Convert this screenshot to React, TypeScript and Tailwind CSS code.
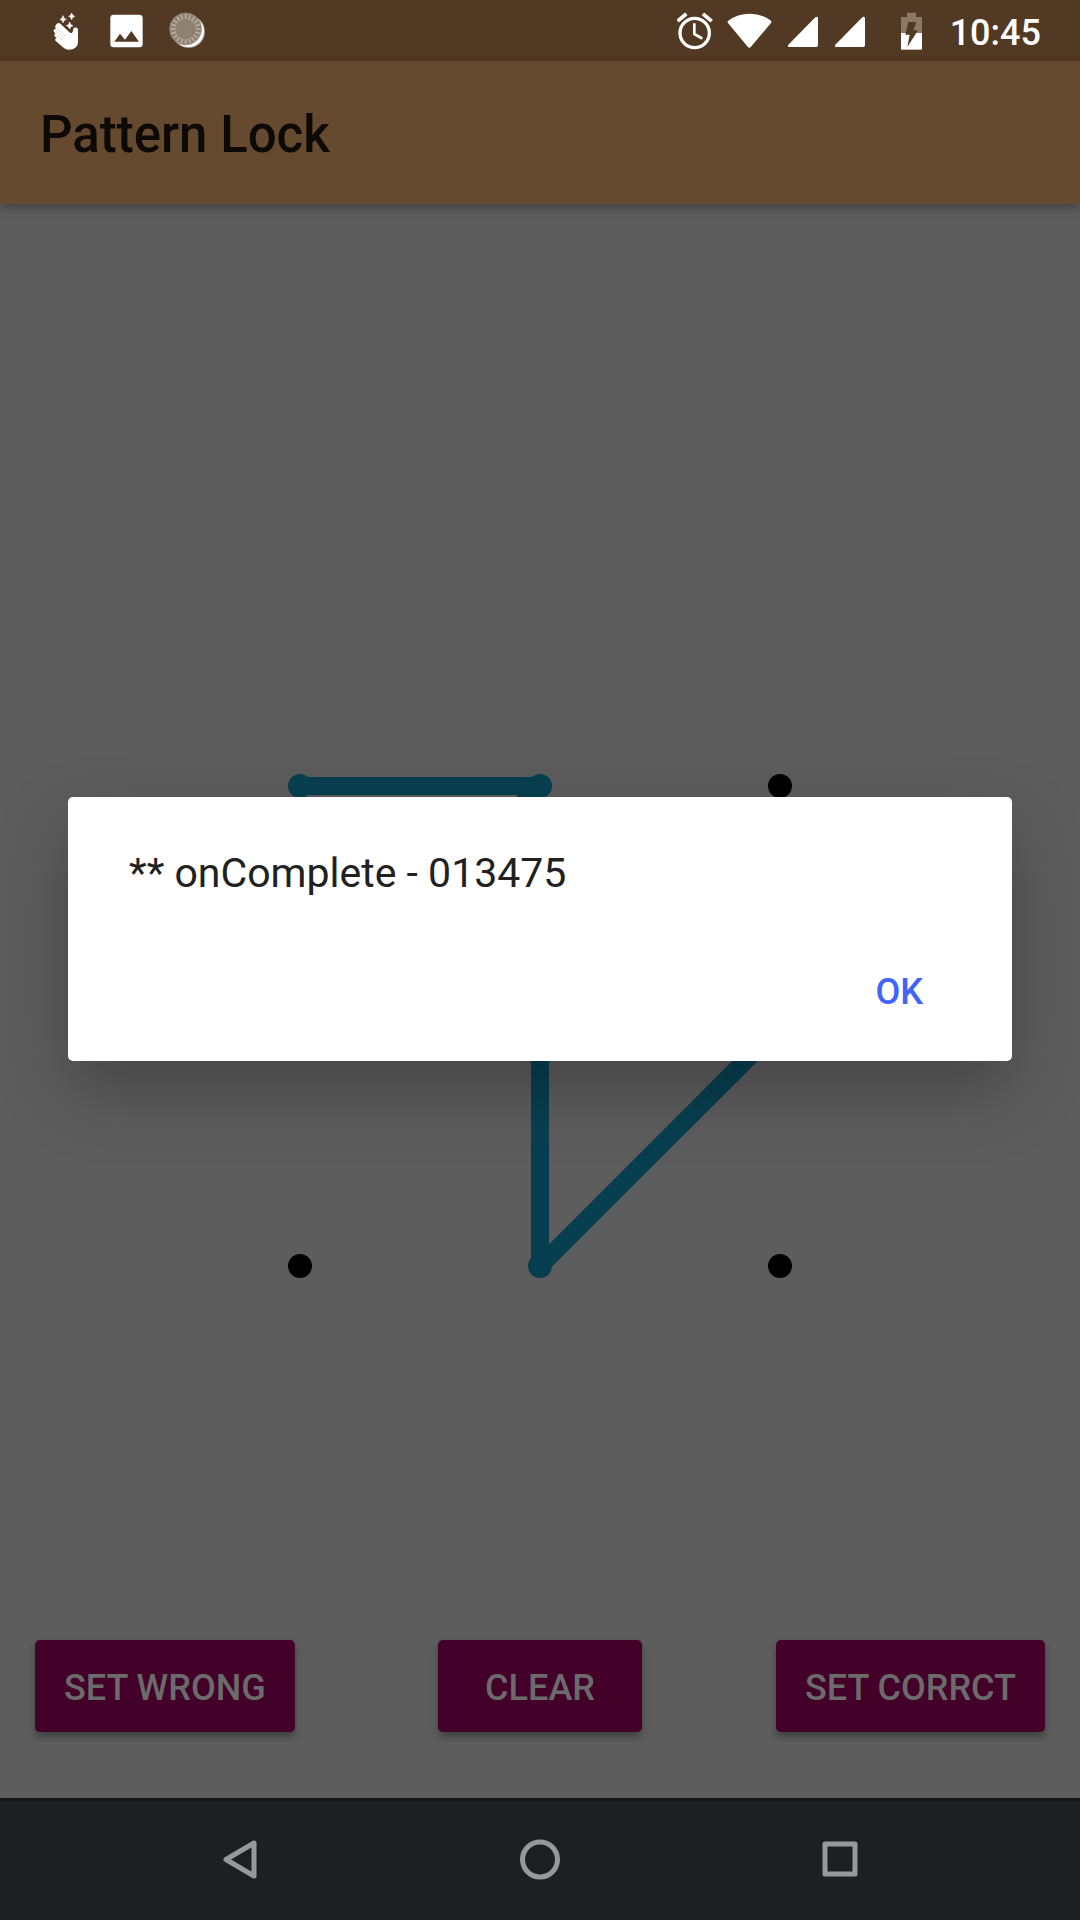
import React from "react";

const DOTS = [0, 1, 2, 3, 4, 5, 6, 7, 8];
const PATTERN = [0, 1, 3, 4, 7, 5];
const SPACING = 240;
const RADIUS = 12;

const dotX = (i: number) => RADIUS + (i % 3) * SPACING;
const dotY = (i: number) => RADIUS + Math.floor(i / 3) * SPACING;

function HandIcon() {
  return (
    <svg className="w-7 h-[42px]" viewBox="66 28 84 126" fill="#fff" aria-hidden="true">
      <g stroke="#fff" strokeWidth="2" strokeLinejoin="round">
        <path d="M99 45c2 7 4 9 10 11-6 2-8 4-10 10-2-6-4-8-9-10 5-2 7-4 9-11Z" />
        <path d="M125 37c2 6 4 8 9 10-5 2-7 4-9 10-2-6-4-8-9-10 5-2 7-4 9-10Z" />
        <path d="M119 64c2 7 4 9 10 11-6 2-8 4-10 10-2-6-4-8-10-10 6-2 8-4 10-11Z" />
      </g>
      <path d="M80 70c3-4 8-4 11-1l29 27c3 2 7 1 8-3l2-8c2-6 14-6 14 3v36c0 15-12 23-27 23-8 0-13-3-18-7l-21-18c-5-4-2-10 3-9-5-4-8-6-8-10 0-3 2-4 4-4-4-3-7-6-6-10 1-4 4-5 7-4-4-4-3-11 2-15Z" />
      <path d="m82 84 26 22M79 93l24 20M82 106l16 13" fill="none" stroke="#a89a8c" strokeWidth="2" strokeDasharray="3 2" />
    </svg>
  );
}

function ImageIcon() {
  return (
    <svg className="w-[33px] h-[42px]" viewBox="240 28 99 126" aria-hidden="true">
      <rect x="241" y="42" width="97" height="98" rx="10" fill="#fff" />
      <path d="m253 123 17-24 15 18 19-26 23 32Z" fill="#523923" />
    </svg>
  );
}

function DiscIcon() {
  const ticks = Array.from({ length: 20 }, (_, i) => i * 18);
  return (
    <svg className="w-[38px] h-[42px]" viewBox="414 28 114 126" aria-hidden="true">
      <circle cx="476" cy="93" r="49" fill="#a4988c" />
      <circle cx="475" cy="92" r="47" fill="#fff" />
      <circle cx="467" cy="85" r="48" fill="#8f8172" stroke="#a4988c" strokeWidth="2" />
      {ticks.map((a) => (
        <path key={a} d="M467 40v15" stroke="#b5aca2" strokeWidth="5" transform={`rotate(${a} 467 85)`} />
      ))}
    </svg>
  );
}

function AlarmIcon() {
  return (
    <svg className="w-9 h-[42px]" viewBox="51 28 108 126" fill="none" stroke="#fff" aria-hidden="true">
      <circle cx="104" cy="97" r="44" strokeWidth="10" />
      <path d="M57 58 75 43M151 58 133 43" strokeWidth="11" strokeLinecap="square" />
      <path d="M103 71v29l21 12" strokeWidth="8" strokeLinecap="round" strokeLinejoin="round" />
    </svg>
  );
}

function WifiIcon() {
  return (
    <svg className="w-[46px] h-[42px]" viewBox="201 28 138 126" fill="#fff" aria-hidden="true">
      <path d="M205 60q27-21 64-21t64 21q3 3 0 7l-60 71q-5 6-10 0L204 67q-3-4 1-7Z" />
    </svg>
  );
}

function SignalIcon() {
  return (
    <svg className="w-[30px] h-[42px]" viewBox="384 28 90 126" fill="#fff" aria-hidden="true">
      <path d="M466 50q7-4 8 3v81q0 5-5 5h-81q-7-1-3-7Z" />
    </svg>
  );
}

function BatteryIcon() {
  return (
    <svg className="w-[21px] h-[42px]" viewBox="93 28 63 126" aria-hidden="true">
      <path d="M93 49h18V36h27v13h18v48H93Z" fill="#8a7868" />
      <path d="M93 97h63v50H93Z" fill="#fff" />
      <path d="M115 64h24l-9 25h14l-32 50 7-37h-13Z" fill="#523923" />
    </svg>
  );
}

function PatternGrid() {
  const side = 2 * (SPACING + RADIUS);
  return (
    <svg className="w-[504px] h-[504px]" viewBox={`0 0 ${side} ${side}`} role="img" aria-label="Pattern 013475">
      {PATTERN.slice(1).map((p, i) => (
        <line
          key={p}
          x1={dotX(PATTERN[i])}
          y1={dotY(PATTERN[i])}
          x2={dotX(p)}
          y2={dotY(p)}
          stroke="#083f50"
          strokeWidth="18"
        />
      ))}
      {DOTS.map((i) => (
        <circle key={i} cx={dotX(i)} cy={dotY(i)} r={RADIUS} fill={PATTERN.includes(i) ? "#083f50" : "#000"} />
      ))}
    </svg>
  );
}

function ActionButton({ label }: { label: string }) {
  return (
    <button
      type="button"
      className="h-[92px] min-w-[204px] rounded-[5px] bg-[#430029] px-[29px] pt-1 text-[36px] leading-[44px] font-medium text-[#6b6b6b] shadow-[0_5px_7px_rgba(0,0,0,0.3)]"
    >
      {label}
    </button>
  );
}

export default function App() {
  return (
    <div className="flex min-h-screen flex-col bg-[#5d5d5d] font-['Roboto',sans-serif]">
      <div className="flex h-[61px] items-center justify-between bg-[#523923] pl-[52px] pr-[39px]">
        <div className="flex items-center">
          <HandIcon />
          <div className="ml-[30px] flex"><ImageIcon /></div>
          <div className="ml-[25px] flex"><DiscIcon /></div>
        </div>
        <div className="flex items-center">
          <AlarmIcon />
          <div className="ml-[14px] flex"><WifiIcon /></div>
          <div className="ml-[15px] flex gap-[17px]"><SignalIcon /><SignalIcon /></div>
          <div className="ml-9 flex"><BatteryIcon /></div>
          <span className="ml-7 pt-1 text-[36px] leading-[42px] font-medium text-white">10:45</span>
        </div>
      </div>

      <div className="relative flex flex-1 flex-col">
        <header className="flex h-[143px] items-center bg-[#664a2f] px-10 pt-1 shadow-[0_4px_10px_rgba(0,0,0,0.3)]">
          <h1 className="text-[51px] leading-[60px] font-medium text-[#0d0905]">Pattern Lock</h1>
        </header>

        <main className="flex flex-1 flex-col">
          <div className="flex flex-1 items-center justify-center pt-[208px]">
            <PatternGrid />
          </div>
          <div className="grid grid-cols-[1fr_auto_1fr] px-[35px] pb-[66px]">
            <div className="flex justify-start"><ActionButton label="SET WRONG" /></div>
            <ActionButton label="CLEAR" />
            <div className="flex justify-end"><ActionButton label="SET CORRCT" /></div>
          </div>
        </main>

        <div className="absolute inset-0 flex items-center px-[68px] pb-0.5">
          <div
            role="alertdialog"
            aria-describedby="message"
            className="flex w-full flex-col rounded-[5px] bg-white pt-[51px] pb-[23px] shadow-[0_30px_70px_rgba(0,0,0,0.25)]"
          >
            <p id="message" className="px-[61px] text-[41px] leading-[50px] text-[#212121]">
              ** onComplete - 013475
            </p>
            <div className="flex justify-end pt-12 pr-[69px]">
              <button type="button" className="h-[92px] px-5 text-[36px] leading-[44px] font-medium text-[#4264fb]">
                OK
              </button>
            </div>
          </div>
        </div>
      </div>

      <nav className="grid h-[122px] grid-cols-3 items-center border-t-[3px] border-[#141517] bg-[#1c2021] px-[90px]">
        <button type="button" aria-label="Back" className="flex justify-center">
          <svg className="h-11 w-11" viewBox="0 0 44 44" fill="none" stroke="#979899" strokeWidth="5" strokeLinejoin="round">
            <path d="M36 4v33L8 20.500Z" />
          </svg>
        </button>
        <button type="button" aria-label="Home" className="flex justify-center">
          <svg className="h-11 w-11" viewBox="0 0 44 44" fill="none" stroke="#979899" strokeWidth="5">
            <circle cx="22" cy="20.500" r="17.500" />
          </svg>
        </button>
        <button type="button" aria-label="Recent apps" className="flex justify-center">
          <svg className="h-11 w-11" viewBox="0 0 44 44" fill="none" stroke="#979899" strokeWidth="5" strokeLinejoin="round">
            <rect x="7" y="5" width="30" height="30" />
          </svg>
        </button>
      </nav>
    </div>
  );
}
